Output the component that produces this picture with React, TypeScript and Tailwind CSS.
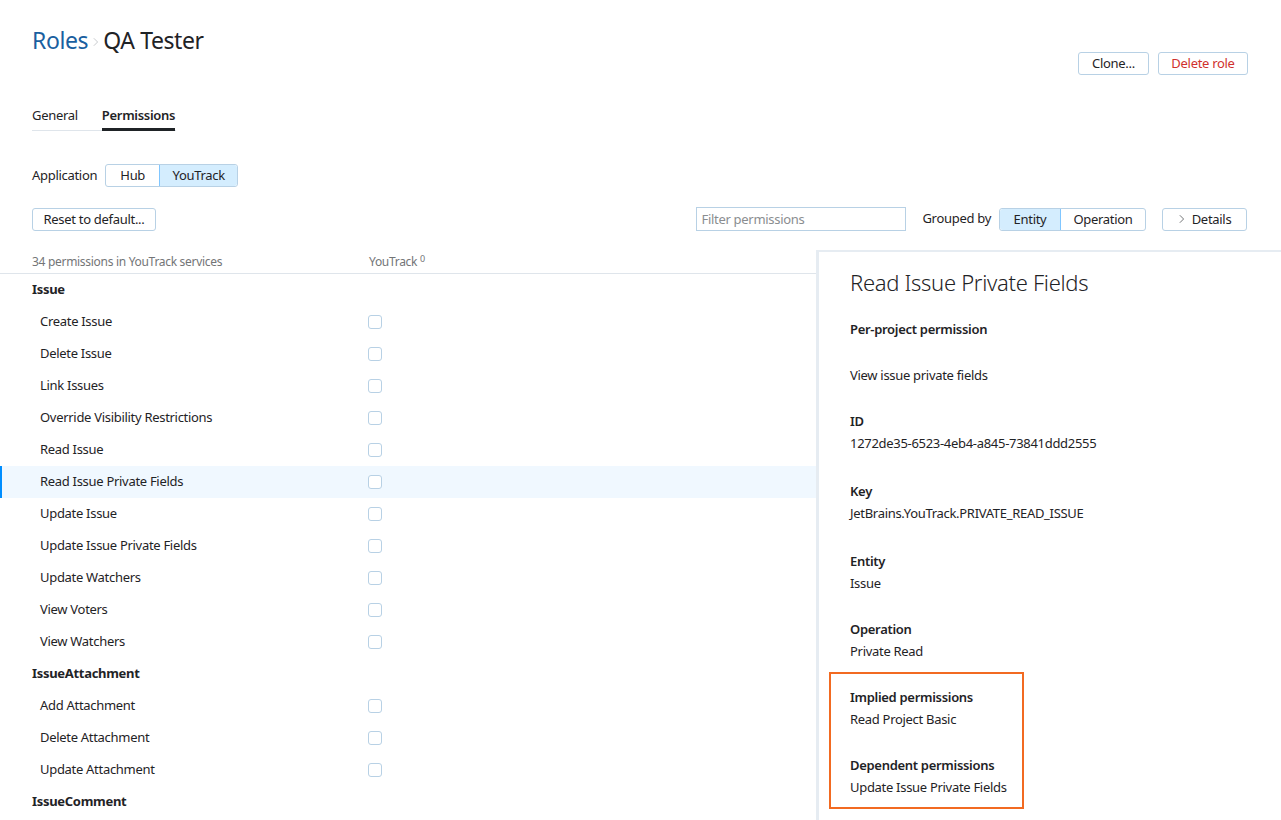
const groups: { name: string; items: string[] }[] = [
  {
    name: 'Issue',
    items: [
      'Create Issue',
      'Delete Issue',
      'Link Issues',
      'Override Visibility Restrictions',
      'Read Issue',
      'Read Issue Private Fields',
      'Update Issue',
      'Update Issue Private Fields',
      'Update Watchers',
      'View Voters',
      'View Watchers',
    ],
  },
  {
    name: 'IssueAttachment',
    items: ['Add Attachment', 'Delete Attachment', 'Update Attachment'],
  },
  { name: 'IssueComment', items: [] },
];

const selected = 'Read Issue Private Fields';

const btn =
  'h-[23px] whitespace-nowrap rounded-[3px] border border-[#b8d1e5] bg-white text-center text-[13px] leading-[21px] text-[#1f2326]';

function Chevron({ className = '' }: { className?: string }) {
  return (
    <svg viewBox="0 0 8 12" className={className} fill="none" stroke="currentColor" strokeWidth={1.2}>
      <path d="M2 1.5 6.5 6 2 10.5" />
    </svg>
  );
}

export default function App() {
  return (
    <div
      className="relative h-[820px] overflow-hidden bg-white text-[13px] tracking-[-0.3px] text-[#1f2326]"
      style={{ fontFamily: '"Segoe UI", "Noto Sans", Arial, sans-serif' }}
    >
      {/* Header */}
      <div className="flex items-start justify-between pl-8 pr-[33px] pt-[24px]">
        <h1 className="flex items-center text-[23px] leading-[32px] tracking-[-0.4px]">
          <span className="text-[#1a5fa0]">Roles</span>
          <Chevron className="mx-[4px] mt-[4px] h-[10px] w-[7px] text-[#c8cbce]" />
          <span>QA Tester</span>
        </h1>
        <div className="mt-[28px] flex gap-[9px]">
          <button className={`${btn} w-[71px]`}>Clone...</button>
          <button className={`${btn} w-[90px] text-[#d0312d]`}>Delete role</button>
        </div>
      </div>

      {/* Tabs */}
      <div className="ml-8 mt-[30px] flex w-[144px] gap-[24px] border-b border-[#dfe5eb]">
        <div className="pb-[5px] leading-[20px]">General</div>
        <div className="-mb-px border-b-[3px] border-[#1f2326] pb-[2px] font-semibold leading-[20px]">
          Permissions
        </div>
      </div>

      {/* Application */}
      <div className="ml-8 mt-[33px] flex items-center gap-[8px]">
        <span>Application</span>
        <div className="flex h-[23px] rounded-[3px] border border-[#b8d1e5] text-[13px] leading-[21px]">
          <div className="w-[53px] text-center">Hub</div>
          <div className="w-[78px] rounded-r-[3px] border-l border-[#80c6ff] bg-[#d4edfe] text-center">
            YouTrack
          </div>
        </div>
      </div>

      {/* Toolbar */}
      <div className="ml-8 mr-[34px] mt-[20px] flex items-center">
        <button className={`${btn} w-[124px]`}>Reset to default...</button>
        <div className="ml-auto h-[24px] w-[210px] border border-[#b8d1e5] px-[4px] leading-[22px] text-[#8a8d90]">
          Filter permissions
        </div>
        <span className="ml-[16px]">Grouped by</span>
        <div className="ml-[8px] flex h-[23px] rounded-[3px] border border-[#b8d1e5] leading-[21px]">
          <div className="w-[61px] rounded-l-[3px] border-r border-[#80c6ff] bg-[#d4edfe] text-center">Entity</div>
          <div className="w-[84px] text-center">Operation</div>
        </div>
        <button className={`${btn} ml-[16px] flex w-[85px] items-center justify-center gap-[7px]`}>
          <Chevron className="h-[10px] w-[7px] text-[#737577]" />
          Details
        </button>
      </div>

      {/* Table header */}
      <div className="mt-[20px] flex h-[23px] items-center border-b border-[#dfe5eb] pl-8 text-[12px] text-[#737577]">
        <span className="w-[337px]">34 permissions in YouTrack services</span>
        <span>
          YouTrack <sup className="text-[9px]">0</sup>
        </span>
      </div>

      {/* Rows */}
      <div>
        {groups.map((g) => (
          <div key={g.name}>
            <div className="flex h-8 items-center pl-8 font-bold">{g.name}</div>
            {g.items.map((item) => {
              const active = item === selected;
              return (
                <div
                  key={item}
                  className={`flex h-8 items-center border-l-2 pl-[38px] ${
                    active ? 'border-[#008eff] bg-[#f0f8ff]' : 'border-transparent'
                  }`}
                >
                  <span className="w-[328px]">{item}</span>
                  <span className="h-[14px] w-[14px] rounded-[3px] border border-[#b8d1e5] bg-white" />
                </div>
              );
            })}
          </div>
        ))}
      </div>

      {/* Details panel */}
      <div className="absolute bottom-0 left-[816px] right-0 top-[250px] border-l-[3px] border-t-[2px] border-[#e6ecf2] bg-white pl-[31px] pt-[15px]">
        <h2 className="text-[22px] font-light leading-[30px]">Read Issue Private Fields</h2>
        <div className="mt-[23px] font-semibold leading-[18px]">Per-project permission</div>
        <div className="mt-[28px] leading-[18px]">View issue private fields</div>

        <Field label="ID" value="1272de35-6523-4eb4-a845-73841ddd2555" className="mt-[27px]" />
        <Field label="Key" value="JetBrains.YouTrack.PRIVATE_READ_ISSUE" className="mt-[28px]" />
        <Field label="Entity" value="Issue" className="mt-[28px]" />
        <Field label="Operation" value="Private Read" className="mt-[26px]" />

        <div className="-ml-[21px] mt-[11px] w-[195px] border-2 border-[#f26a21] pb-[10px] pl-[19px] pt-[13px]">
          <Field label="Implied permissions" value="Read Project Basic" />
          <Field label="Dependent permissions" value="Update Issue Private Fields" className="mt-[26px]" />
        </div>
      </div>
    </div>
  );
}

function Field({ label, value, className = '' }: { label: string; value: string; className?: string }) {
  return (
    <div className={className}>
      <div className="font-semibold leading-[20px]">{label}</div>
      <div className="mt-[2px] leading-[20px]">{value}</div>
    </div>
  );
}
